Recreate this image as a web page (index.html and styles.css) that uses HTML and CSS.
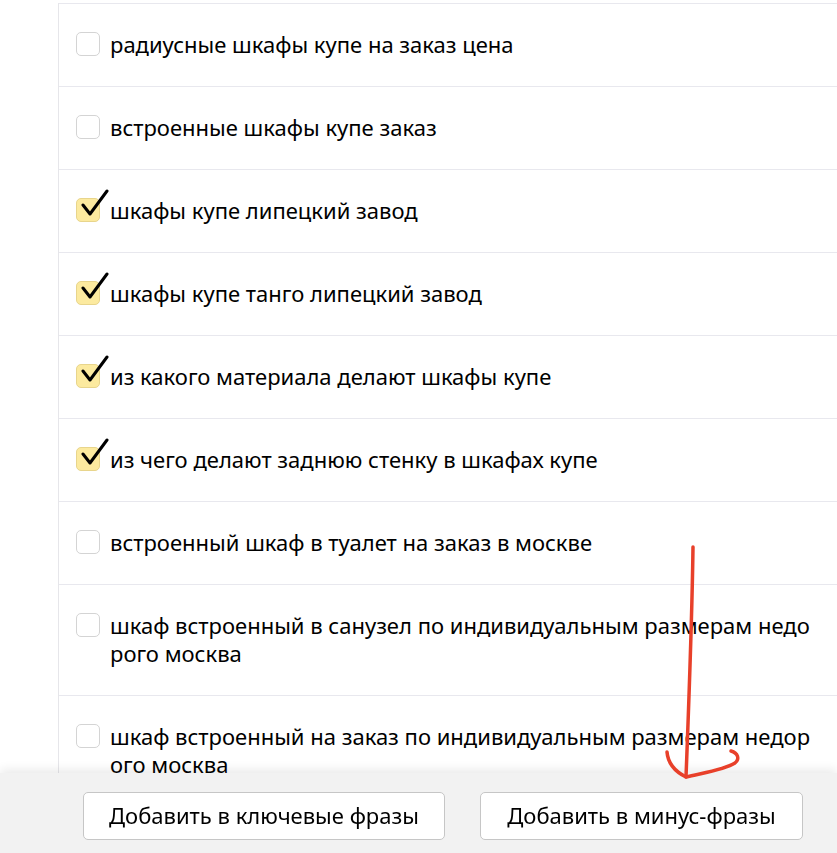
FILE: index.html
```html
<!DOCTYPE html>
<html lang="ru">
<head>
<meta charset="utf-8">
<link rel="stylesheet" href="styles.css">
</head>
<body>
<div class="page">
  <ul class="list">
    <li class="row"><span class="box"></span><span class="text">радиусные шкафы купе на заказ цена</span></li>
    <li class="row"><span class="box"></span><span class="text">встроенные шкафы купе заказ</span></li>
    <li class="row"><span class="box checked"><svg class="tick" viewBox="0 0 30 30"><path d="M4 16 L11 25 L28 2"/></svg></span><span class="text">шкафы купе липецкий завод</span></li>
    <li class="row"><span class="box checked"><svg class="tick" viewBox="0 0 30 30"><path d="M4 16 L11 25 L28 2"/></svg></span><span class="text">шкафы купе танго липецкий завод</span></li>
    <li class="row"><span class="box checked"><svg class="tick" viewBox="0 0 30 30"><path d="M4 16 L11 25 L28 2"/></svg></span><span class="text">из какого материала делают шкафы купе</span></li>
    <li class="row"><span class="box checked"><svg class="tick" viewBox="0 0 30 30"><path d="M4 16 L11 25 L28 2"/></svg></span><span class="text">из чего делают заднюю стенку в шкафах купе</span></li>
    <li class="row"><span class="box"></span><span class="text">встроенный шкаф в туалет на заказ в москве</span></li>
    <li class="row"><span class="box"></span><span class="text">шкаф встроенный в санузел по индивидуальным размерам недо<br>рого москва</span></li>
    <li class="row"><span class="box"></span><span class="text">шкаф встроенный на заказ по индивидуальным размерам недор<br>ого москва</span></li>
  </ul>
</div>
<div class="footer">
  <button class="btn btn-keys">Добавить в ключевые фразы</button>
  <button class="btn btn-minus">Добавить в минус-фразы</button>
</div>
<svg class="arrow" width="837" height="853" viewBox="0 0 837 853">
  <path d="M693 547 C692 620 689 700 686 777"/>
  <path d="M667 752 C668 764 676 772 686 777 C702 773 724 770 735 763 C740 759 738 753 731 751"/>
</svg>
</body>
</html>
```
FILE: styles.css
```css
html, body {
  margin: 0;
  padding: 0;
  background: #fff;
  height: 853px;
  overflow: hidden;
}
body {
  font-family: "Noto Sans", "Open Sans", sans-serif;
  color: #000;
}
.page {
  padding-top: 3px;
  padding-left: 58px;
}
.list {
  list-style: none;
  margin: 0;
  padding: 0;
  border-left: 1px solid #e6e6ea;
}
.row {
  display: flex;
  align-items: flex-start;
  gap: 10px;
  border-top: 1px solid #e8e8ee;
  padding: 27px 0 27px 17px;
}
.box {
  position: relative;
  flex: none;
  width: 22px;
  height: 22px;
  margin-top: 1px;
  border: 1px solid #d4d4d4;
  border-radius: 5px;
  background: #fff;
}
.box.checked {
  background: #fcea9f;
  border-color: #e8d58c;
}
.tick {
  position: absolute;
  left: 2px;
  top: -10px;
  width: 30px;
  height: 30px;
  fill: none;
  stroke: #000;
  stroke-width: 3;
  stroke-linecap: round;
  stroke-linejoin: round;
}
.text {
  font-size: 22px;
  line-height: 28px;
  white-space: nowrap;
  margin: -1px 0 1px;
}
.footer {
  position: fixed;
  left: 0;
  right: 0;
  bottom: 0;
  height: 80px;
  box-sizing: border-box;
  padding: 19px 0 0 83px;
  display: flex;
  gap: 35px;
  background: #f2f2f2;
  box-shadow: 0 -3px 10px rgba(0, 0, 0, 0.09);
}
.btn {
  height: 48px;
  box-sizing: border-box;
  border: 1px solid #c6c6c6;
  border-radius: 5px;
  background: #fff;
  font-family: inherit;
  font-size: 22px;
  color: #000;
  padding: 0 20px 2px;
}
.btn-keys { width: 362px; }
.btn-minus { width: 323px; }
.arrow {
  position: fixed;
  left: 0;
  top: 0;
  pointer-events: none;
  fill: none;
  stroke: #e8402a;
  stroke-width: 3.5;
  stroke-linecap: round;
  stroke-linejoin: round;
}
```
